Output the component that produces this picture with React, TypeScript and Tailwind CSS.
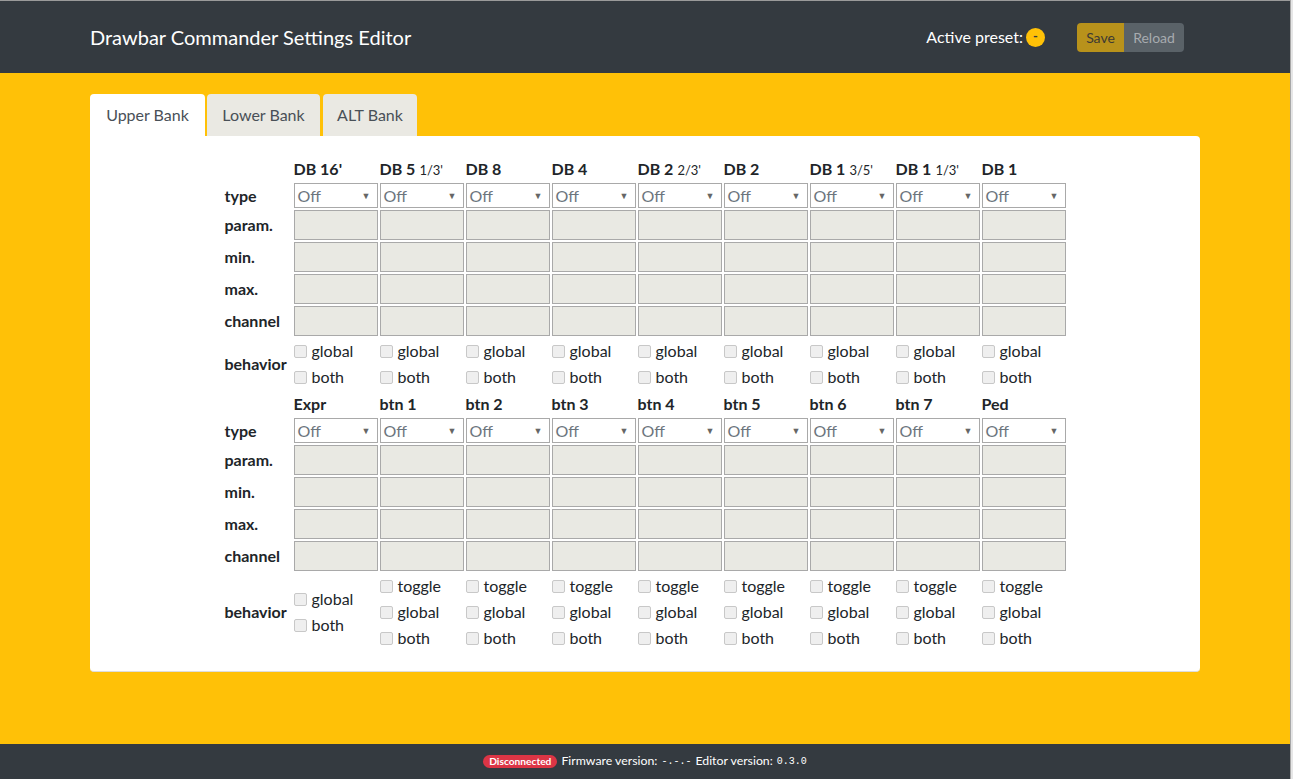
import React from "react";

type Head = { main: string; sub?: string };

const upperHeads: Head[] = [
  { main: "DB 16'" },
  { main: "DB 5", sub: "1/3'" },
  { main: "DB 8" },
  { main: "DB 4" },
  { main: "DB 2", sub: "2/3'" },
  { main: "DB 2" },
  { main: "DB 1", sub: "3/5'" },
  { main: "DB 1", sub: "1/3'" },
  { main: "DB 1" },
];

const lowerHeads: Head[] = [
  { main: "Expr" },
  { main: "btn 1" },
  { main: "btn 2" },
  { main: "btn 3" },
  { main: "btn 4" },
  { main: "btn 5" },
  { main: "btn 6" },
  { main: "btn 7" },
  { main: "Ped" },
];

const Check = ({ label }: { label: string }) => (
  <div className="h-[26px] flex items-center">
    <span className="w-[13px] h-[13px] border border-[#c8c8c8] bg-[#efefef] rounded-[2px] mr-[5px]" />
    <span className="text-[#212529]">{label}</span>
  </div>
);

const Select = () => (
  <div className="h-[25px] border border-[#a9a9a9] bg-white flex items-center justify-between pl-[3px] pr-[6px] text-[#6c757d]">
    <span>Off</span>
    <span className="text-[9px] text-[#666]">▼</span>
  </div>
);

const Field = () => <div className="h-[30px] border border-[#a9a9a9] bg-[#e9e9e3]" />;

const Label = ({ children }: { children: React.ReactNode }) => (
  <div className="font-bold text-[#212529] flex items-center">{children}</div>
);

const Block = ({ heads, withToggle }: { heads: Head[]; withToggle: boolean }) => (
  <div className="grid grid-cols-[67px_repeat(9,84px)] gap-[2px] items-stretch">
    <div />
    {heads.map((h, i) => (
      <div key={"h" + i} className="h-[24px] leading-6 font-bold text-[#212529]">
        {h.main}
        {h.sub && <span className="font-normal text-[13px] ml-[4px]">{h.sub}</span>}
      </div>
    ))}

    <Label>type</Label>
    {heads.map((_, i) => <Select key={"s" + i} />)}

    {["param.", "min.", "max.", "channel"].map((row) => (
      <React.Fragment key={row}>
        <Label>{row}</Label>
        {heads.map((_, i) => <Field key={row + i} />)}
      </React.Fragment>
    ))}

    <Label>behavior</Label>
    {heads.map((_, i) => (
      <div key={"b" + i} className="flex flex-col justify-center">
        {withToggle && i > 0 && <Check label="toggle" />}
        <Check label="global" />
        <Check label="both" />
      </div>
    ))}
  </div>
);

export default function App() {
  return (
    <div className="flex w-full min-h-[779px] font-['Lato',sans-serif] text-[16px]">
      <div className="w-[1290px] flex flex-col border-t border-[#9a9a9a]">
        <header className="h-[72px] bg-[#343a40] flex items-center px-[90px]">
          <h1 className="text-white text-[20px] flex-1">Drawbar Commander Settings Editor</h1>
          <div className="flex items-center text-white">
            <span>Active preset:</span>
            <span className="ml-[3px] w-[19px] h-[19px] rounded-full bg-[#ffc107] text-[#343a40] text-[13px] flex items-center justify-center font-bold">
              -
            </span>
          </div>
          <div className="ml-[32px] mr-[16px] flex text-[14px]">
            <div className="h-[29px] w-[47px] justify-center flex items-center bg-[#b8921b] text-[#3d3a33] rounded-l-[4px]">Save</div>
            <div className="h-[29px] w-[60px] justify-center flex items-center bg-[#5a6268] text-[#a7abaf] rounded-r-[4px]">Reload</div>
          </div>
        </header>

        <main className="flex-1 bg-[#ffc107] px-[90px] pt-[21px]">
          <div className="flex text-[#495057]">
            <div className="h-[42px] w-[115px] justify-center flex items-center bg-white rounded-t-[4px]">Upper Bank</div>
            <div className="h-[42px] w-[113px] ml-[2px] justify-center flex items-center bg-[#eae9e3] rounded-t-[4px]">Lower Bank</div>
            <div className="h-[42px] w-[94px] ml-[3px] justify-center flex items-center bg-[#eae9e3] rounded-t-[4px]">ALT Bank</div>
          </div>
          <div className="bg-white rounded-b-[4px] rounded-tr-[4px] border-b border-[#dddddd] pt-[21px] pb-[20px] flex flex-col items-center gap-[2px]">
            <Block heads={upperHeads} withToggle={false} />
            <Block heads={lowerHeads} withToggle={true} />
          </div>
        </main>

        <footer className="h-[35px] bg-[#343a40] flex items-center justify-center text-white text-[12.3px]">
          <span className="bg-[#dc3545] text-white font-bold text-[10.2px] rounded-full px-[6px] leading-[13px] mr-[4px]">
            Disconnected
          </span>
          <span>Firmware version:</span>
          <span className="font-['Liberation_Mono',monospace] text-[10px] ml-[4px] mr-[4px]">-.-.-</span>
          <span>Editor version:</span>
          <span className="font-['Liberation_Mono',monospace] text-[10px] ml-[4px]">0.3.0</span>
        </footer>
      </div>
      <div className="w-[3px] border-l border-[#a8a8a8] bg-[#e6e6e6]" />
    </div>
  );
}
